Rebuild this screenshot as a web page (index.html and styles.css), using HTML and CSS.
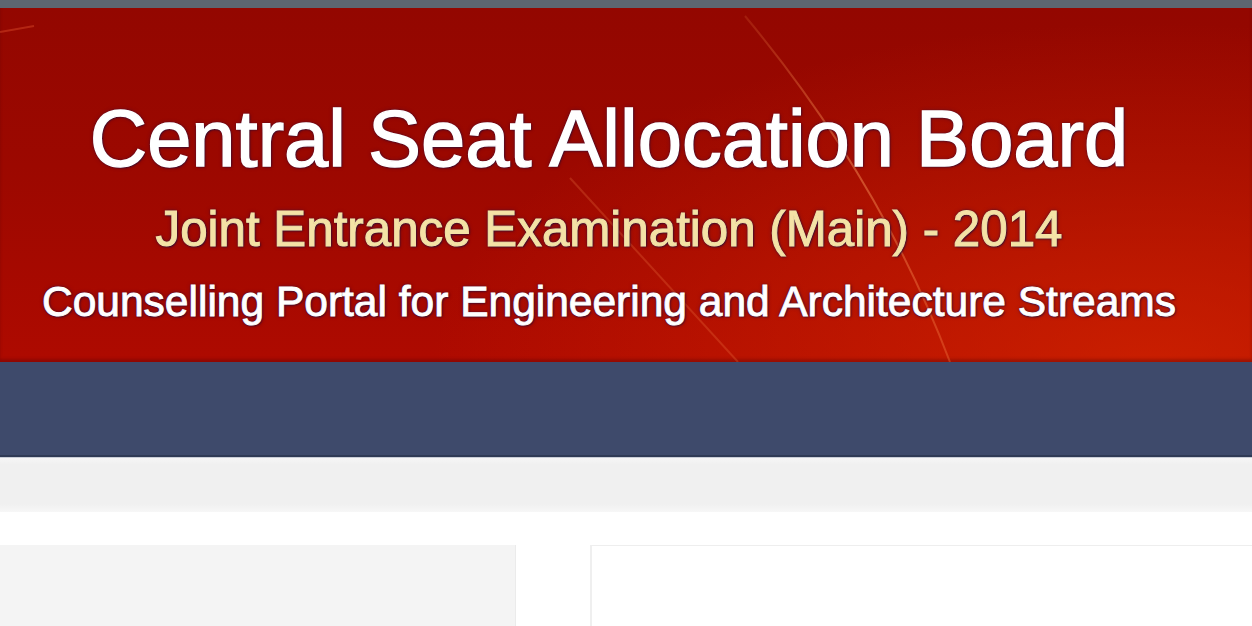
FILE: index.html
```html
<!DOCTYPE html>
<html lang="en">
<head>
<meta charset="utf-8">
<title>Central Seat Allocation Board - JEE (Main) 2014</title>
<link rel="stylesheet" href="styles.css">
</head>
<body>
  <div class="topbar"></div>
  <header class="banner">
    <svg class="banner-streaks" viewBox="0 0 1252 354" preserveAspectRatio="none" aria-hidden="true">
      <defs>
        <linearGradient id="streak" x1="0" y1="0" x2="0" y2="1">
          <stop offset="0" stop-color="#ff9a50" stop-opacity="0.15"/>
          <stop offset="0.4" stop-color="#ffa060" stop-opacity="0.45"/>
          <stop offset="1" stop-color="#ff9050" stop-opacity="0.3"/>
        </linearGradient>
      </defs>
      <path d="M745 8 Q880 170 950 354" fill="none" stroke="url(#streak)" stroke-width="2"/>
      <path d="M570 170 L738 354" fill="none" stroke="#ff9050" stroke-opacity="0.22" stroke-width="2"/>
      <path d="M0 24 L34 18" fill="none" stroke="#ff7040" stroke-opacity="0.3" stroke-width="2"/>
    </svg>
    <div class="banner-text">
      <h1 class="title">Central Seat Allocation Board</h1>
      <p class="subtitle">Joint Entrance Examination (Main) - 2014</p>
      <p class="tagline">Counselling Portal for Engineering and Architecture Streams</p>
    </div>
  </header>
  <nav class="mainnav"></nav>
  <div class="strip"></div>
  <main class="content">
    <aside class="sidebar"></aside>
    <section class="panel"></section>
  </main>
</body>
</html>
```
FILE: styles.css
```css
html, body {
  margin: 0;
  padding: 0;
}

body {
  width: 1252px;
  height: 626px;
  overflow: hidden;
  background: #ffffff;
  font-family: "Liberation Sans", Arial, Helvetica, sans-serif;
}

.topbar {
  height: 8px;
  background: #5d6670;
}

.banner {
  position: relative;
  height: 354px;
  overflow: hidden;
  background:
    radial-gradient(ellipse 1000px 480px at 1150px 360px, rgba(220, 44, 0, 0.6), rgba(220, 44, 0, 0) 72%),
    linear-gradient(to bottom, #930700 0%, #9c0800 45%, #ae0a00 100%);
  box-shadow: inset 0 -3px 3px rgba(70, 0, 10, 0.3);
}

.banner-streaks {
  position: absolute;
  inset: 0;
  width: 100%;
  height: 100%;
}

.banner-text {
  position: relative;
  display: flex;
  flex-direction: column;
  align-items: center;
  padding: 91px 34px 0 0;
  text-align: center;
  text-shadow: 0 0 2px rgba(40, 20, 70, 0.95), 0 0 4px rgba(40, 20, 70, 0.6), 1px 1px 2px rgba(30, 10, 50, 0.8);
}

.title {
  margin: 0;
  font-size: 79.5px;
  line-height: 80px;
  font-weight: normal;
  color: #ffffff;
  -webkit-text-stroke: 1.4px #ffffff;
  white-space: nowrap;
}

.subtitle {
  margin: 25px 0 0;
  font-size: 49.3px;
  line-height: 50px;
  color: #f4e2a6;
  -webkit-text-stroke: 1px #f4e2a6;
  white-space: nowrap;
}

.tagline {
  margin: 27px 0 0;
  font-size: 42.5px;
  line-height: 42px;
  color: #ffffff;
  -webkit-text-stroke: 0.9px #ffffff;
  white-space: nowrap;
}

.mainnav {
  height: 93px;
  background: #3e4a6b;
  border-bottom: 2px solid #2f3a55;
  box-shadow: 0 1px 0 #c9cdd6;
}

.strip {
  height: 54px;
  margin-top: 1px;
  background: linear-gradient(to bottom, #f6f6f6 0%, #f0f0f0 12%, #f0f0f0 85%, #f7f7f7 100%);
}

.content {
  display: flex;
  align-items: flex-start;
  gap: 74px;
  padding-top: 33px;
  height: 100px;
}

.sidebar {
  width: 515px;
  height: 100%;
  background: #f4f4f4;
  border-right: 1px solid #ebebeb;
}

.panel {
  flex: 1;
  height: 100%;
  background: #ffffff;
  border-top: 1px solid #eeeeee;
  border-left: 2px solid #efefef;
}
```
